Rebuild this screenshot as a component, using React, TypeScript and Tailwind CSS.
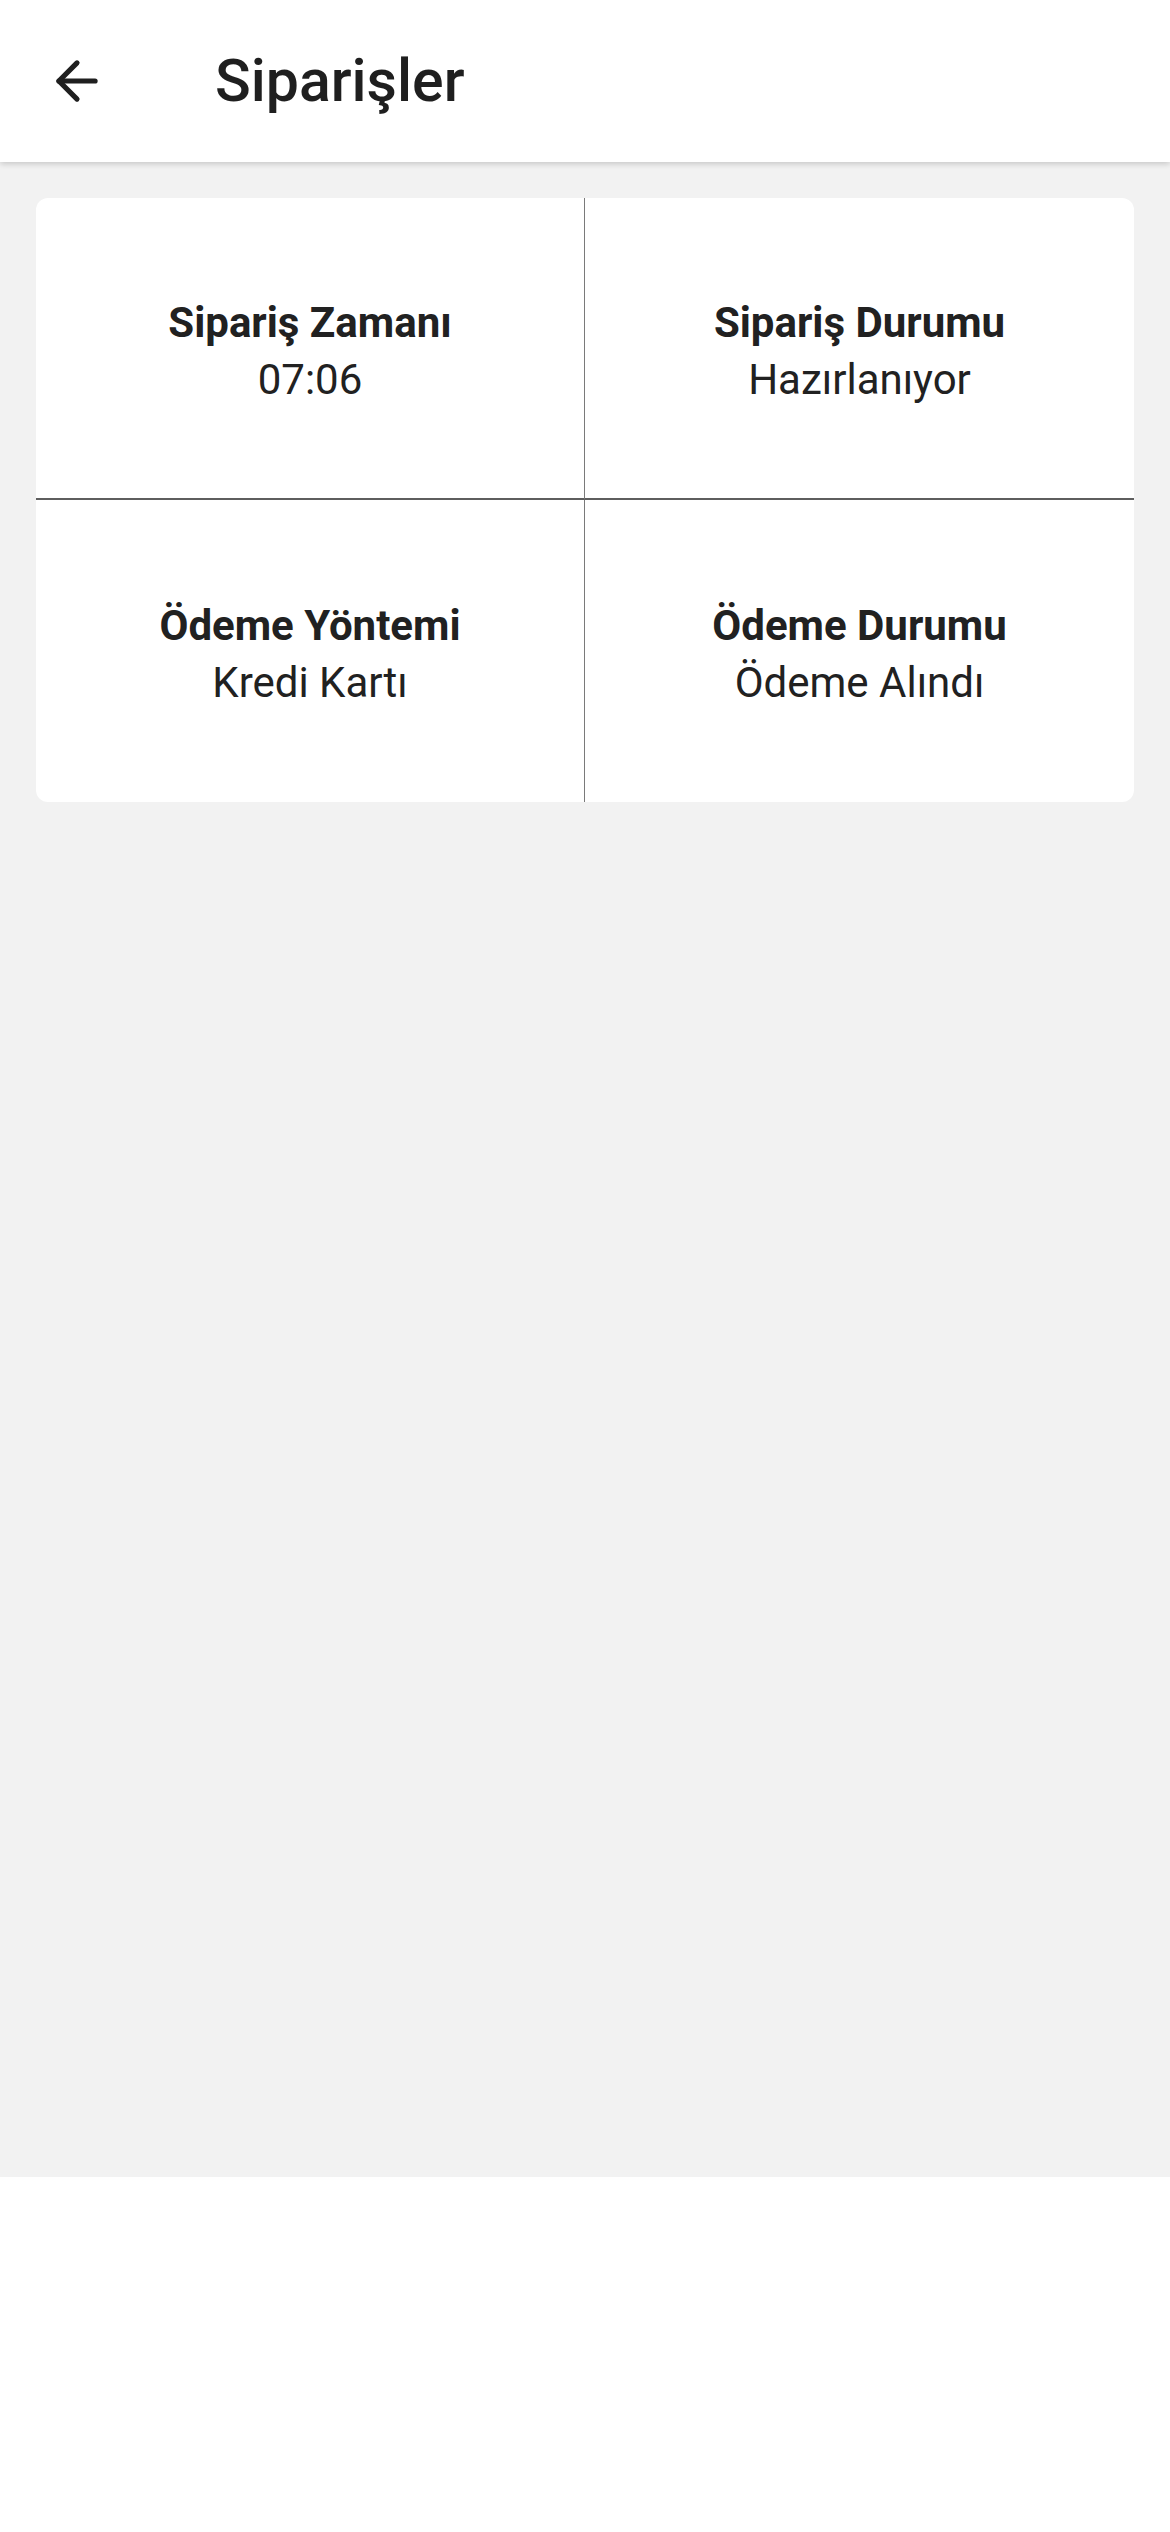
import { ArrowLeft } from 'lucide-react';

const items = [
  { label: 'Sipariş Zamanı', value: '07:06' },
  { label: 'Sipariş Durumu', value: 'Hazırlanıyor' },
  { label: 'Ödeme Yöntemi', value: 'Kredi Kartı' },
  { label: 'Ödeme Durumu', value: 'Ödeme Alındı' },
];

function Cell({ label, value, className }: { label: string; value: string; className?: string }) {
  return (
    <div className={`flex h-[302px] flex-col items-center justify-center pt-[6px] text-[42px] leading-[57px] text-[#212121] ${className ?? ''}`}>
      <span className="font-bold">{label}</span>
      <span>{value}</span>
    </div>
  );
}

export default function App() {
  return (
    <div className="flex h-[2532px] w-[1170px] flex-col bg-white font-['Roboto','Noto_Sans',sans-serif]">
      {/* Toolbar */}
      <header className="relative z-10 flex h-[162px] shrink-0 items-center bg-white shadow-[0_2px_6px_rgba(0,0,0,0.18)]">
        <button className="ml-[41px] flex h-[72px] w-[72px] items-center justify-center text-[#1f1f1f]">
          <ArrowLeft size={62} strokeWidth={2} />
        </button>
        <h1 className="ml-[102px] text-[59px] font-medium text-[#1f1f1f]">Siparişler</h1>
      </header>

      {/* Content */}
      <main className="h-[2015px] shrink-0 bg-[#f2f2f2] px-[36px] pt-[36px]">
        <div className="grid grid-cols-2 overflow-hidden rounded-[12px] bg-white">
          <Cell {...items[0]} className="border-r border-b-2 border-r-[#7a7a7a] border-b-[#5e5e5e]" />
          <Cell {...items[1]} className="border-b-2 border-b-[#5e5e5e]" />
          <Cell {...items[2]} className="border-r border-r-[#7a7a7a]" />
          <Cell {...items[3]} />
        </div>
      </main>

      <div className="flex-1 bg-white" />
    </div>
  );
}
